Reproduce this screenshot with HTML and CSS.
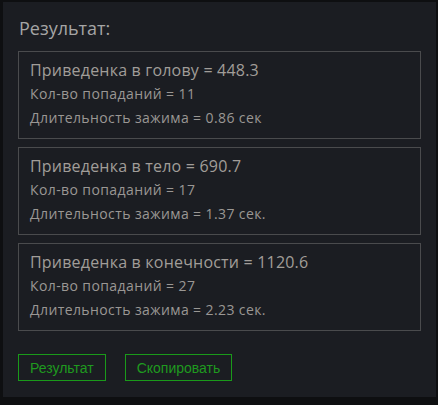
FILE: index.html
```html
<!DOCTYPE html>
<html lang="ru">
<head>
    <meta charset="UTF-8">
    <meta name="viewport" content="width=device-width, initial-scale=1.0">
    <title>Результат</title>
    <link rel="stylesheet" href="styles.css">
</head>
<body>

    <div class="panel">
        <h2 class="title">Результат:</h2>

        <div class="card">
            <p class="card-head">Приведенка в голову = 448.3</p>
            <p class="card-line">Кол-во попаданий = 11</p>
            <p class="card-line">Длительность зажима = 0.86 сек</p>
        </div>

        <div class="card">
            <p class="card-head">Приведенка в тело = 690.7</p>
            <p class="card-line">Кол-во попаданий = 17</p>
            <p class="card-line">Длительность зажима = 1.37 сек.</p>
        </div>

        <div class="card">
            <p class="card-head">Приведенка в конечности = 1120.6</p>
            <p class="card-line">Кол-во попаданий = 27</p>
            <p class="card-line">Длительность зажима = 2.23 сек.</p>
        </div>

        <div class="buttons">
            <button type="button">Результат</button>
            <button type="button">Скопировать</button>
        </div>
    </div>

</body>
</html>
```

FILE: styles.css
```css
body {
    font-family: 'Open Sans', 'Noto Sans', sans-serif;
    background-color: #0e0f11;
    margin: 0;
    padding: 2px 2px 0 3px;
}

.panel {
    width: 433px;
    height: 395px;
    box-sizing: border-box;
    background-color: #1b1d22;
    padding: 15px 15px 0 15px;
}

.title {
    margin: 0 0 12px 1px;
    font-size: 18px;
    font-weight: 400;
    color: #a5a5a5;
    line-height: 22px;
}

.card {
    border: 1px solid #4a4b4d;
    height: 88px;
    box-sizing: border-box;
    padding: 6px 11px 0 11px;
    margin-bottom: 8px;
}

.card p {
    margin: 0;
}

.card-head {
    font-size: 16px;
    line-height: 24px;
    letter-spacing: 0.2px;
    color: #a19d99;
}

.card-line {
    font-size: 14px;
    line-height: 24px;
    letter-spacing: 0.4px;
    color: #9a9794;
}

.buttons {
    display: flex;
    gap: 19px;
    margin-top: 23px;
}

button {
    font-family: 'Liberation Sans', Arial, sans-serif;
    font-size: 14px;
    background-color: transparent;
    color: #1f9a1f;
    border: 1px solid #1a9a1a;
    height: 27px;
    padding: 0 11px;
    cursor: pointer;
}
```
